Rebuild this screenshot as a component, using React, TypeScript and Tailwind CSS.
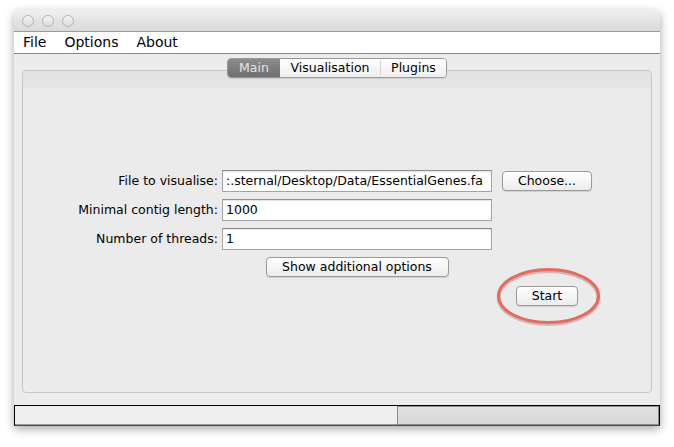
import React from 'react'

const font = "font-['DejaVu_Sans','Liberation_Sans',sans-serif]"

function AquaButton({ label, className = '' }: { label: string; className?: string }) {
  return (
    <button
      className={`h-[20px] rounded-[4px] border border-[#9a9a9a] bg-gradient-to-b from-[#ffffff] to-[#ececec] text-[12.5px] leading-none text-black shadow-[0_1px_1px_rgba(0,0,0,0.12)] ${className}`}
    >
      {label}
    </button>
  )
}

function TextField({ value }: { value: string }) {
  return (
    <div className="flex h-[22px] items-center overflow-hidden border border-[#a3a3a3] border-t-[#8e8e8e] bg-white pl-[3px] text-[12.5px] whitespace-nowrap shadow-[inset_0_1px_1px_rgba(0,0,0,0.12)]">
      {value}
    </div>
  )
}

function TrafficLight() {
  return <div className="h-[12px] w-[12px] rounded-full border border-[#b4b4b4] bg-gradient-to-b from-[#f4f4f4] to-[#dcdcdc]" />
}

export default function App() {
  return (
    <div className={`h-[447px] w-[674px] bg-white pl-[14px] pt-[10px] ${font}`}>
      <div className="flex h-[416px] w-[646px] flex-col overflow-hidden rounded-t-[5px] bg-[#ececec] shadow-[0_3px_10px_rgba(0,0,0,0.35)]">
        {/* title bar */}
        <div className="flex h-[22px] items-center gap-[8px] border-b border-[#9c9c9c] bg-gradient-to-b from-[#f0f0f0] to-[#d9d9d9] pl-[8px]">
          <TrafficLight />
          <TrafficLight />
          <TrafficLight />
        </div>

        {/* menu bar */}
        <div className="flex h-[22px] items-center border-b border-[#8a8a8a] bg-white text-[14px] text-black">
          {['File', 'Options', 'About'].map(m => (
            <span key={m} className="px-[9px]">{m}</span>
          ))}
        </div>

        {/* content */}
        <div className="flex flex-1 flex-col px-[8px] pt-[4px] pb-[12px]">
          <div className="relative z-10 flex justify-center">
            <div className="flex h-[20px] overflow-hidden rounded-[4px] border border-[#999999] text-[12.5px] shadow-[0_1px_1px_rgba(0,0,0,0.1)]">
              <div className="flex w-[52px] items-center justify-center bg-gradient-to-b from-[#8c8c8c] to-[#6f6f6f] text-[#e4e4e4]">Main</div>
              <div className="flex w-[100px] items-center justify-center bg-gradient-to-b from-white to-[#eeeeee] text-black">Visualisation</div>
              <div className="my-[3px] w-px bg-[#d0d0d0]" />
              <div className="flex w-[65px] items-center justify-center bg-gradient-to-b from-white to-[#eeeeee] text-black">Plugins</div>
            </div>
          </div>

          <div className="-mt-[8px] flex flex-1 flex-col rounded-[4px] border border-[#c6c6c6] bg-[#ebebeb]">
            <div className="h-[17px] rounded-t-[4px] bg-gradient-to-b from-[#e2e2e2] to-[#e6e6e6]" />

            <div className="grid grid-cols-[199px_270px_100px] gap-y-[7px] pt-[82px] text-[12.5px] text-black">
              <div className="flex items-center justify-end pr-[4px]">File to visualise:</div>
              <TextField value=":.sternal/Desktop/Data/EssentialGenes.fa" />
              <div className="flex items-center pl-[10px]">
                <AquaButton label="Choose..." className="w-[90px]" />
              </div>

              <div className="flex items-center justify-end pr-[4px]">Minimal contig length:</div>
              <TextField value="1000" />
              <div />

              <div className="flex items-center justify-end pr-[4px]">Number of threads:</div>
              <TextField value="1" />
              <div />

              <div />
              <div className="flex justify-center">
                <AquaButton label="Show additional options" className="w-[183px]" />
              </div>
              <div />

              <div />
              <div />
              <div className="mt-[2px] flex justify-center pl-[10px]">
                <div className="relative">
                  <AquaButton label="Start" className="w-[62px]" />
                  <svg className="absolute -left-[20px] -top-[20px]" width="105" height="60" viewBox="0 0 105 60">
                    <ellipse cx="52.5" cy="30" rx="50" ry="26.5" fill="none" stroke="rgba(0,0,0,0.18)" strokeWidth="4" transform="translate(0 1.5)" />
                    <ellipse cx="52.5" cy="30" rx="50" ry="26.5" fill="none" stroke="#ef675b" strokeWidth="3" />
                  </svg>
                </div>
              </div>
            </div>
          </div>
        </div>

        {/* status bar */}
        <div className="flex h-[21px] border border-black border-b-[#4a4a4a]">
          <div className="w-[382px] border-b border-[#9a9a9a] bg-[#efefef]" />
          <div className="flex-1 border border-[#8c8c8c] bg-gradient-to-b from-[#e2e2e2] to-[#d6d6d6]" />
        </div>
      </div>
    </div>
  )
}
